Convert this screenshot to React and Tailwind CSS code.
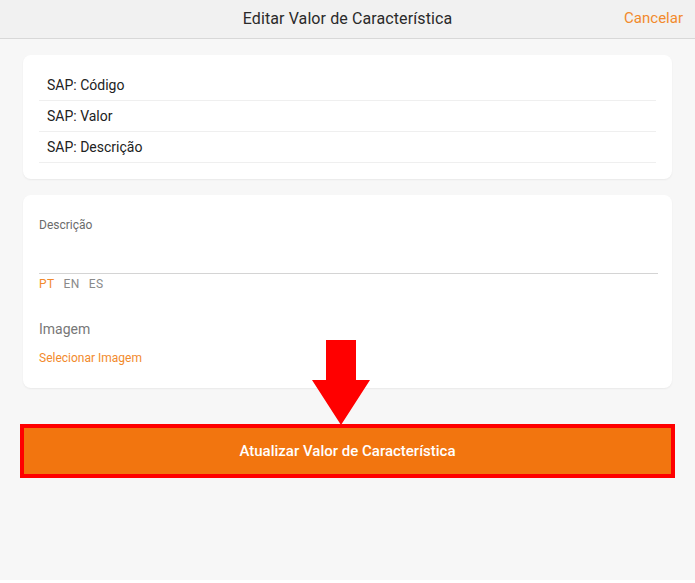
import React from "react";

const rows = ["SAP: Código", "SAP: Valor", "SAP: Descrição"];

const App = () => {
  return (
    <div className="w-[695px] h-[583px] bg-white font-['Roboto',sans-serif]">
      <div className="h-[580px] bg-[#f7f7f7] flex flex-col">
        {/* Header */}
        <header className="relative h-[39px] shrink-0 bg-[#f1f1f1] border-b border-[#d8d8d8] flex items-center justify-center">
          <h1 className="text-[16px] text-[#2a2a2a] tracking-[0.1px]">Editar Valor de Característica</h1>
          <button className="absolute right-[12px] top-[7px] text-[15px] text-[#f28a2c]">Cancelar</button>
        </header>

        {/* SAP card */}
        <section className="mx-[23px] mt-[16px] bg-white rounded-[8px] shadow-[0_1px_2px_rgba(0,0,0,0.06)] px-[16px] pt-[15px] pb-[16px]">
          {rows.map((r) => (
            <div key={r} className="h-[31px] flex items-center pl-[8px] border-b border-[#efefef] text-[14px] text-[#222]">
              {r}
            </div>
          ))}
        </section>

        {/* Form card */}
        <section className="mx-[23px] mt-[16px] bg-white rounded-[8px] shadow-[0_1px_2px_rgba(0,0,0,0.06)] px-[16px] pt-[22px] pb-[22px]">
          <div className="text-[12px] text-[#6b6b6b] leading-[16px]">Descrição</div>
          <div className="h-[41px] border-b border-[#d4d4d4] mr-[-2px]"></div>
          <div className="flex gap-[9px] text-[12px] mt-[2px] leading-[16px] tracking-[0.4px]">
            <span className="text-[#f28a2c]">PT</span>
            <span className="text-[#8a8a8a]">EN</span>
            <span className="text-[#8a8a8a]">ES</span>
          </div>
          <div className="mt-[28px] text-[14px] text-[#777] leading-[18px]">Imagem</div>
          <div className="mt-[12px] text-[12px] text-[#f28a2c] leading-[16px]">Selecionar Imagem</div>
        </section>

        {/* Button with annotation arrow */}
        <div className="relative mx-[20px] mt-[36px]">
          <svg className="absolute left-[291px] top-[-84px]" width="60" height="86" viewBox="0 0 60 86">
            <path d="M15 0 H45 V40 H59 L30 85 L1 40 H15 Z" fill="#ff0000" />
          </svg>
          <button className="w-full h-[54px] border-[4px] border-[#ff0000] bg-[#f2750f] text-white text-[15px] font-medium">
            Atualizar Valor de Característica
          </button>
        </div>
      </div>
    </div>
  );
};

export default App;
